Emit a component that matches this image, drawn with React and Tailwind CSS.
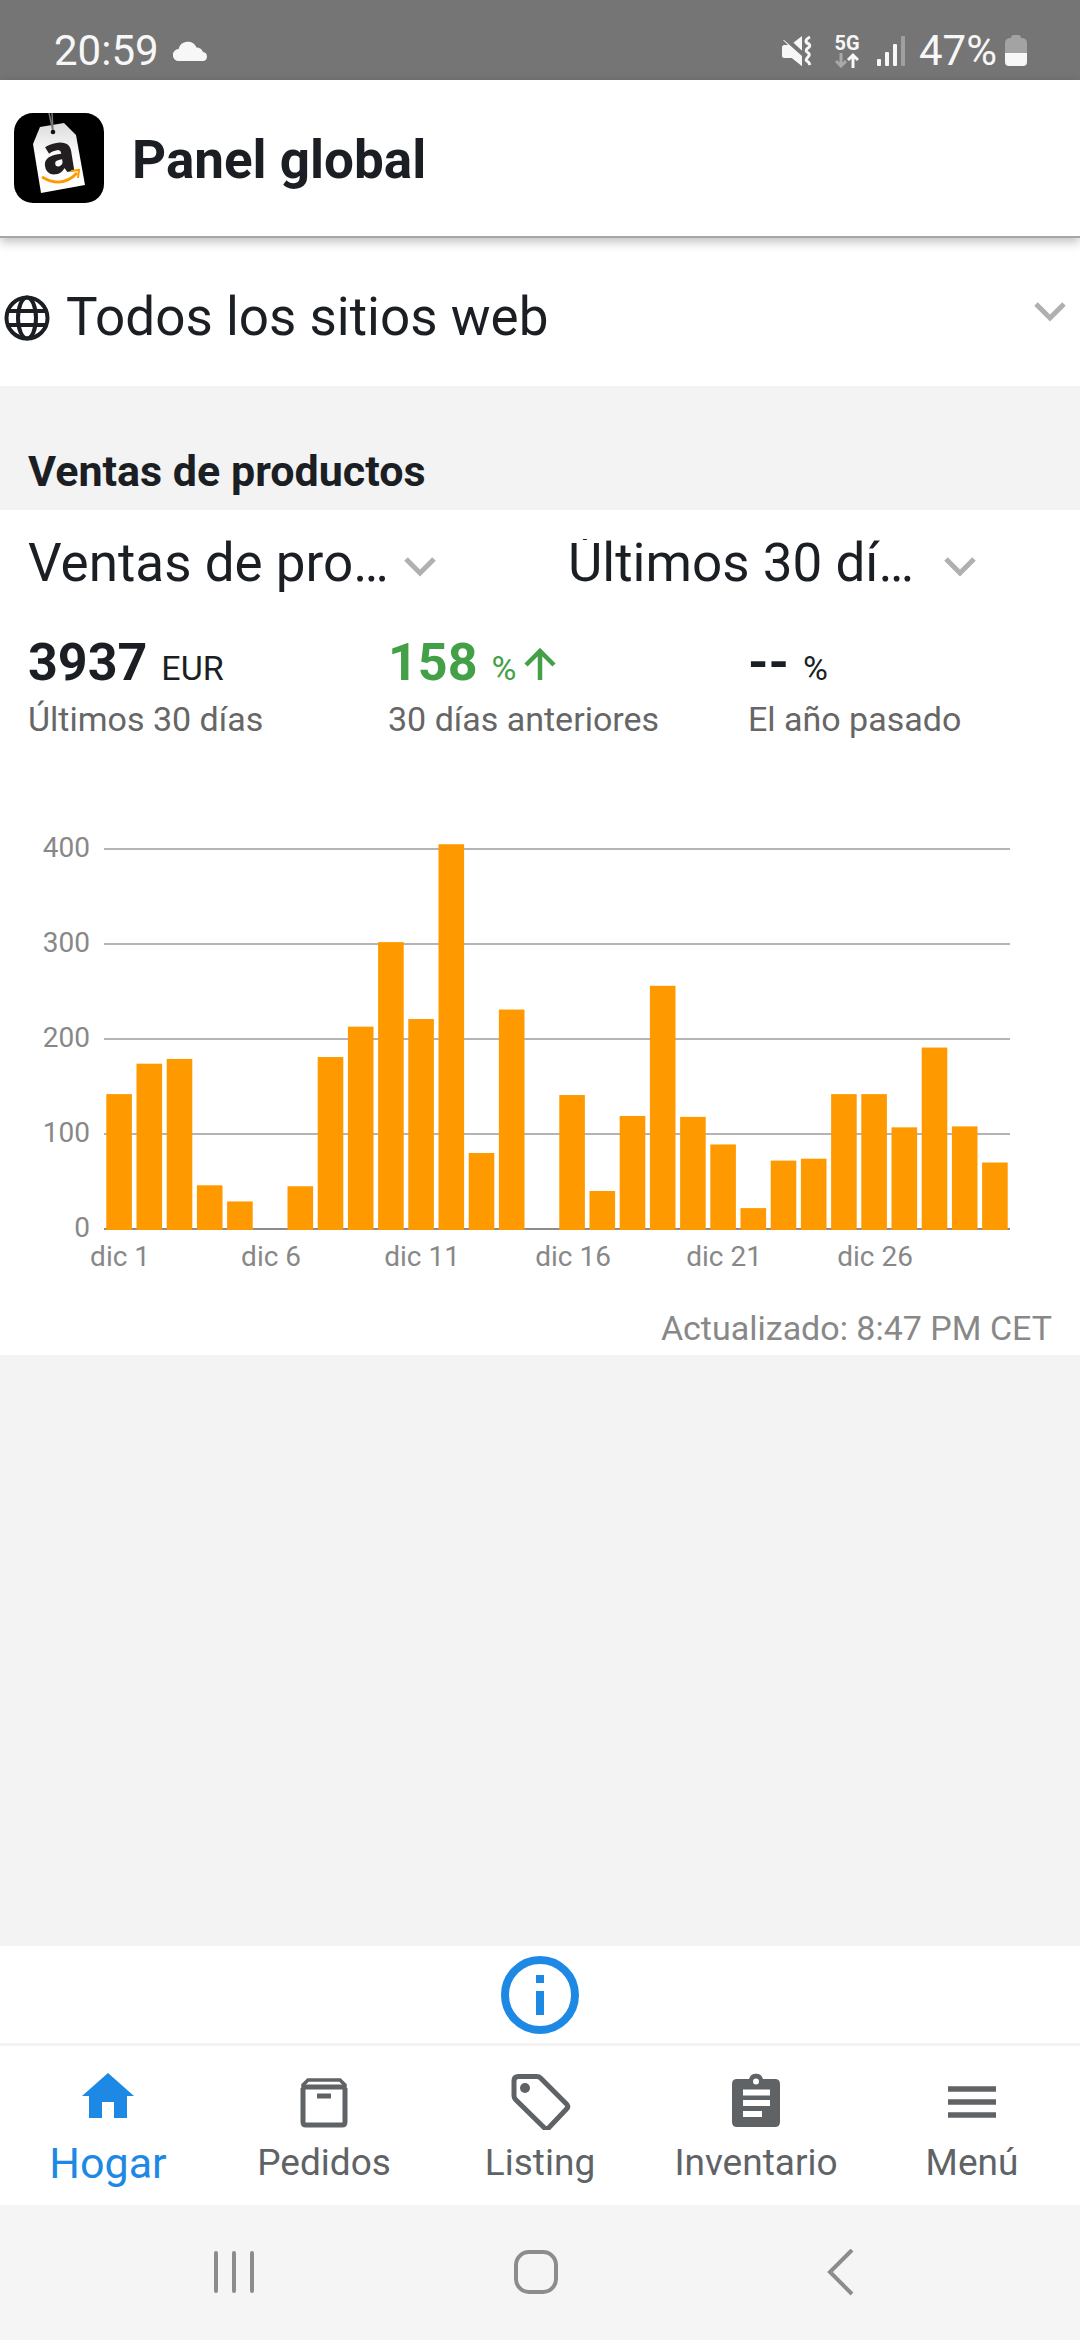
import React, { useState } from 'react';

const ventasPorDia = [
  142, 174, 179, 46, 29, 0, 45, 181, 213, 302, 221, 405, 80, 231, 0,
  141, 40, 119, 256, 118, 89, 22, 72, 74, 142, 142, 107, 191, 108, 70,
];

const CHART = { left: 104, right: 1010, base: 429, unit: 95 };

function StatusBar() {
  return (
    <div className="flex h-20 items-end justify-between bg-[#757575] pr-[53px] pb-[7px] pl-[54px] text-[42px] leading-[44px] text-[#f7f7f7]">
      <div className="flex items-center gap-3.5">
        <span>20:59</span>
        <svg className="h-5 w-9" viewBox="0 0 36 20" fill="currentColor">
          <path d="M6 20a6 6 0 0 1-.4-12A9.500 9.500 0 0 1 23.500 6.500 7 7 0 0 1 30 11a4.600 4.600 0 0 1 .5 9z" />
        </svg>
      </div>
      <div className="flex items-center">
        <svg className="mr-5 h-8 w-8" viewBox="0 0 32 32" fill="currentColor">
          <path d="M12 8 21 1v15z" />
          <path d="M3 10h4l14 12v9l-10-8H4a3 3 0 0 1-3-3v-7q0-2 2-3z" />
          <path d="M3 3 21 20" stroke="#757575" strokeWidth="6" />
          <path d="M3 5 21 21v10l-10-8H4a3 3 0 0 1-3-3v-7q0-3 3-3h3L2 5z" />
          <path d="M29 2q-4 2-4 4t3 3q2 2-1 4t-1 4q4 2 1 5t-1 4 3 4" fill="none" stroke="currentColor" strokeWidth="3" />
        </svg>
        <div className="mr-4 flex w-7 flex-col items-center gap-px">
          <span className="text-xl leading-4 font-bold">5G</span>
          <svg className="h-4 w-6" viewBox="0 0 24 16" fill="none" strokeWidth="3">
            <path d="M6 1v13M1 9l5 5 5-5" stroke="#a9a9a9" />
            <path d="M18 16V3M13 8l5-5 5 5" stroke="currentColor" />
          </svg>
        </div>
        <svg className="mr-3.5 h-[30px] w-7" viewBox="0 0 28 30" fill="currentColor">
          <rect x="0" y="23" width="4" height="7" rx="1" />
          <rect x="8" y="16" width="4" height="14" rx="1" />
          <rect x="16" y="8" width="4" height="22" rx="1" />
          <rect x="24" y="0" width="4" height="30" rx="1" fill="#a0a0a0" />
        </svg>
        <span>47%</span>
        <svg className="ml-2 h-8 w-[22px]" viewBox="0 0 22 32">
          <path d="M6 3q0-3 3-3h4q3 0 3 3 6 0 6 5v11H0V8q0-5 6-5z" fill="#a3a3a3" />
          <path d="M0 18h22v9q0 4-4 4H4q-4 0-4-4z" fill="#f7f7f7" />
        </svg>
      </div>
    </div>
  );
}

function AppLogo() {
  return (
    <svg className="h-[90px] w-[90px]" viewBox="0 0 90 90">
      <defs>
        <linearGradient id="etiqueta" x1="0" y1="0" x2="0" y2="1">
          <stop offset="0" stopColor="#dcdcdc" />
          <stop offset="0.5" stopColor="#ffffff" />
        </linearGradient>
      </defs>
      <rect width="90" height="90" rx="19" fill="#000" />
      <path d="M26 14 50 10 62 22 71 72 27 80 19 31z" fill="url(#etiqueta)" />
      <path d="M35 0 39 18M38 0l1 18" stroke="#777" strokeWidth="1.500" />
      <circle cx="39" cy="19" r="2.300" fill="#111" />
      <g transform="rotate(-9 45 45)">
        <text x="28" y="60" fontFamily="Open Sans, sans-serif" fontWeight="800" fontSize="54" fill="#231f20">a</text>
      </g>
      <path d="M28 64q20 12 35-4" fill="none" stroke="#f90" strokeWidth="2.800" />
      <path d="M57 58l8-1-1 8" fill="none" stroke="#f90" strokeWidth="2" />
    </svg>
  );
}

function Chevron({ className = '' }) {
  return (
    <svg className={`pointer-events-none h-5 w-8 shrink-0 ${className}`} viewBox="0 0 32 20" fill="none" stroke="#b0b0b0" strokeWidth="5">
      <path d="M2 2l14 14L30 2" />
    </svg>
  );
}

function Filtro({ label, options }) {
  return (
    <div className="flex flex-1 items-center pl-7">
      <div className="h-14 w-[362px] overflow-hidden">
        <select
          aria-label={label}
          className="-mt-[7px] h-[62px] w-full appearance-none truncate bg-transparent text-[53px] leading-[62px] text-[#1b1f24]"
        >
          {options.map((option) => (
            <option key={option}>{option}</option>
          ))}
        </select>
      </div>
      <Chevron className="ml-3.5" />
    </div>
  );
}

function Metrica({ valor, unidad, texto, sube }) {
  return (
    <div className="flex-1 pl-7">
      <p className={sube ? 'text-[#43a047]' : 'text-[#1b1f24]'}>
        <span className="text-[52px] leading-[60px] font-bold">{valor}</span>
        <span className="ml-3.5 text-[34px]">{unidad}</span>
        {sube && (
          <svg className="ml-2 inline-block h-8 w-8 align-baseline" viewBox="0 0 32 32" fill="none" stroke="currentColor" strokeWidth="4.500">
            <path d="M16 32V4M2 17 16 3l14 14" />
          </svg>
        )}
      </p>
      <p className="text-[34px] leading-[50px] text-[#666]">{texto}</p>
    </div>
  );
}

function Grafico() {
  const { left, right, base, unit } = CHART;
  const paso = (right - left) / ventasPorDia.length;

  return (
    <svg className="block w-full" viewBox="0 0 1080 490" role="img" aria-label="Ventas por día">
      {[0, 100, 200, 300, 400].map((v) => {
        const y = base - (v / 100) * unit;
        return (
          <g key={v}>
            <line x1={left} x2={right} y1={y} y2={y} stroke={v === 0 ? '#8c8c8c' : '#b4b4b4'} strokeWidth="2" />
            <text x="90" y={y + 8} textAnchor="end" fontSize="28" fill="#888">{v}</text>
          </g>
        );
      })}
      {ventasPorDia.map((v, i) => (
        <rect key={i} x={left + i * paso + 2.3} y={base - (v / 100) * unit} width="25.600" height={v ? (v / 100) * unit + 1 : 0} fill="#ff9900" />
      ))}
      {[1, 6, 11, 16, 21, 26].map((dia) => (
        <text key={dia} x={left + (dia - 0.5) * paso + 1} y="466" textAnchor="middle" fontSize="28" fill="#888">
          dic {dia}
        </text>
      ))}
    </svg>
  );
}

const tabs = [
  {
    nombre: 'Hogar',
    icono: <path d="M32 7 58 30h-7v22H38V36H26v16H13V30H6z" fill="currentColor" />,
  },
  {
    nombre: 'Pedidos',
    icono: (
      <g fill="none" stroke="currentColor" strokeWidth="5">
        <path d="M11 22v34q0 3 3 3h36q3 0 3-3V22" />
        <path d="M11 23v-4l5-5h32l5 5v4" strokeWidth="3.500" />
        <path d="M10 21h44M25 30h14" />
      </g>
    ),
  },
  {
    nombre: 'Listing',
    icono: (
      <g fill="none" stroke="currentColor" strokeWidth="5" strokeLinejoin="round">
        <path d="M10.500 10.500H29q2 0 3.500 1.500l26 26q2.500 2.500 0 5L41 61.500q-2.500 2.500-5 0L8 34q-2-2-2-4V15q0-4.500 4.500-4.500z" />
        <circle cx="17" cy="22" r="5" fill="currentColor" stroke="none" />
      </g>
    ),
  },
  {
    nombre: 'Inventario',
    icono: (
      <path
        fillRule="evenodd"
        fill="currentColor"
        d="M13 13h12a7.300 7.300 0 0 1 14 0h12q5 0 5 5v38q0 5-5 5H13q-5 0-5-5V18q0-5 5-5zM32 12.500a3 3 0 1 0 0 6 3 3 0 0 0 0-6zM19 23.500v6h27v-6zM19 34v6h27v-6zM19 45v6h19v-6z"
      />
    ),
  },
  {
    nombre: 'Menú',
    icono: <path d="M8 23h48M8 36h48M8 49h48" stroke="currentColor" strokeWidth="5.500" />,
  },
];

function App() {
  const [activo, setActivo] = useState('Hogar');

  return (
    <div className="flex min-h-screen flex-col bg-[#f3f3f3] font-['Roboto',sans-serif]">
      <StatusBar />

      <header className="relative z-10 flex h-[158px] items-center gap-7 border-b-2 border-[#a6a6a6] bg-white px-3.5 shadow-[0_4px_10px_rgba(0,0,0,0.25)]">
        <AppLogo />
        <h1 className="pt-1.5 text-[53px] font-bold text-[#1b1f24]">Panel global</h1>
      </header>

      <div className="flex h-[148px] items-center bg-white pr-3.5 pl-1">
        <div className="flex flex-1 items-center gap-4 pt-3">
          <svg className="h-[46px] w-[46px] shrink-0" viewBox="0 0 46 46" fill="none" stroke="#1b1f24" strokeWidth="4">
            <circle cx="23" cy="23" r="20.500" />
            <ellipse cx="23" cy="23" rx="9" ry="20.500" />
            <path d="M4 16h38M4 30h38" />
          </svg>
          <select aria-label="Sitio web" className="flex-1 appearance-none bg-transparent text-[53px] text-[#1b1f24]">
            <option>Todos los sitios web</option>
          </select>
        </div>
        <Chevron />
      </div>

      <main className="flex-1">
        <h2 className="px-7 pt-[58px] pb-3 text-[43px] leading-[54px] font-bold text-[#1b1f24]">Ventas de productos</h2>
        <section className="bg-white pb-[5px]">
          <div className="flex h-[114px] items-center">
            <Filtro label="Métrica" options={['Ventas de productos']} />
            <Filtro label="Periodo" options={['Últimos 30 días']} />
          </div>
          <div className="flex pt-[9px]">
            <Metrica valor="3937" unidad="EUR" texto="Últimos 30 días" />
            <Metrica valor="158" unidad="%" texto="30 días anteriores" sube />
            <Metrica valor="--" unidad="%" texto="El año pasado" />
          </div>
          <div className="pt-14">
            <Grafico />
          </div>
          <p className="px-7 pt-4 text-right text-[34px] leading-[44px] text-[#888]">Actualizado: 8:47 PM CET</p>
        </section>
      </main>

      <div className="flex h-[97px] items-center justify-center bg-white">
        <button aria-label="Información">
          <svg className="h-[78px] w-[78px]" viewBox="0 0 78 78" fill="none" stroke="#1e88e5" strokeWidth="8">
            <circle cx="39" cy="39" r="35" />
            <path d="M39 19v8M39 35v24" />
          </svg>
        </button>
      </div>

      <nav className="flex h-[162px] border-t-[3px] border-[#f3f3f3] bg-white">
        {tabs.map((tab) => (
          <button
            key={tab.nombre}
            onClick={() => setActivo(tab.nombre)}
            className={`flex flex-1 flex-col items-center pt-5 ${activo === tab.nombre ? 'text-[43px] text-[#1e88e5]' : 'text-[37px] text-[#606366]'}`}
          >
            <svg className="h-16 w-16" viewBox="0 0 64 64" fill="none">
              {tab.icono}
            </svg>
            <span className="mt-1 leading-[58px]">{tab.nombre}</span>
          </button>
        ))}
      </nav>

      <div className="flex h-[135px] items-center justify-around bg-[#f5f5f5] pr-[92px] pl-[84px] text-[#8c8c8c]">
        <button aria-label="Recientes">
          <svg className="h-12 w-12" viewBox="0 0 48 48" fill="none" stroke="currentColor" strokeWidth="4" strokeLinecap="round">
            <path d="M5 4v38M23 4v38M41 4v38" />
          </svg>
        </button>
        <button aria-label="Inicio">
          <svg className="h-12 w-12" viewBox="0 0 48 48" fill="none" stroke="currentColor" strokeWidth="4">
            <rect x="4" y="3" width="40" height="40" rx="13" />
          </svg>
        </button>
        <button aria-label="Atrás">
          <svg className="h-12 w-12" viewBox="0 0 48 48" fill="none" stroke="currentColor" strokeWidth="4">
            <path d="M39 1 17 23l22 22" />
          </svg>
        </button>
      </div>
    </div>
  );
}

export default App;
